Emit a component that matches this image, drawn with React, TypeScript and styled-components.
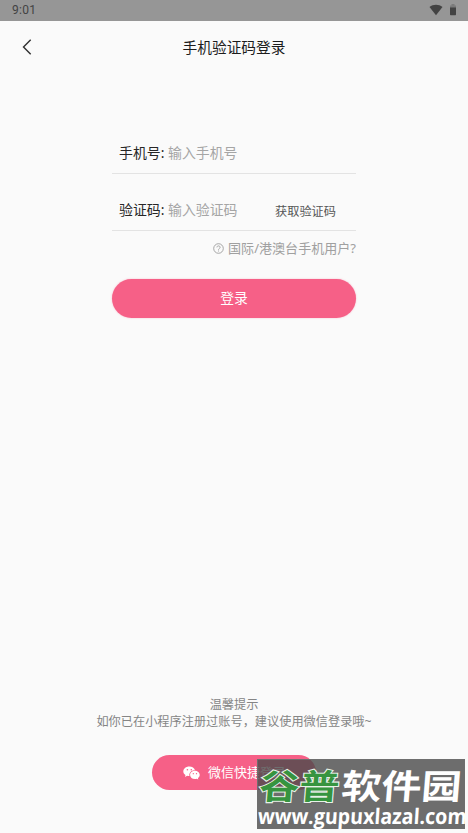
import React from 'react';
import styled, { createGlobalStyle } from 'styled-components';

const GlobalStyle = createGlobalStyle`
  * { box-sizing: border-box; }
  body {
    margin: 0;
    background: #fafafa;
    font-family: "Noto Sans", "Noto Sans CJK SC", sans-serif;
  }
  button, input { font: inherit; border: 0; padding: 0; background: none; }
`;

const Screen = styled.div`
  position: relative;
  display: flex;
  flex-direction: column;
  height: 833px;
  width: 468px;
  background: #fafafa;
  overflow: hidden;
`;

const StatusBar = styled.div`
  display: flex;
  justify-content: space-between;
  height: 21px;
  padding: 0 12px;
  background: #969696;
  color: #434343;
  font: 12px/21px Roboto, sans-serif;
  letter-spacing: 0.25px;
`;

const StatusIcons = styled.div`
  display: flex;
  gap: 7px;
  padding-top: 4px;
`;

const Header = styled.header`
  display: grid;
  grid-template-columns: 54px 1fr 54px;
  align-items: center;
  height: 53px;
  padding-bottom: 2px;
`;

const BackButton = styled.button`
  display: flex;
  justify-content: center;
`;

const Title = styled.h1`
  margin: 0;
  text-align: center;
  font-size: 14.7px;
  line-height: 22px;
  font-weight: 400;
  color: #1c1c1c;
`;

const Form = styled.form`
  display: flex;
  flex-direction: column;
  width: 244px;
  margin: 58px 0 0 112px;
`;

const Field = styled.label<{ $tall?: boolean }>`
  display: flex;
  align-items: center;
  height: ${(p) => (p.$tall ? 57 : 42)}px;
  padding: ${(p) => (p.$tall ? 15 : 0)}px 20px 0 7px;
  border-bottom: 1px solid #e3e3e3;
  font-size: 13.9px;
`;

const Label = styled.span`
  width: 49px;
  padding-bottom: 2px;
  white-space: nowrap;
  color: #262626;
`;

const Input = styled.input`
  width: 100px;
  height: 24px;
  color: #333;
  outline: 0;
  &::placeholder { color: #a5a5a5; opacity: 1; }
`;

const CodeButton = styled.button`
  margin-left: auto;
  padding-top: 2px;
  white-space: nowrap;
  font-size: 12.2px;
  color: #565656;
`;

const HelpLink = styled.div`
  display: flex;
  justify-content: flex-end;
  align-items: center;
  gap: 4px;
  height: 20px;
  margin-top: 7px;
  font-size: 13.05px;
  white-space: nowrap;
  color: #a0a0a0;
`;

const HelpText = styled.span`
  padding-bottom: 2px;
`;

const LoginButton = styled.button`
  height: 39px;
  margin-top: 21px;
  padding-bottom: 4px;
  border-radius: 20px;
  background: #f66087;
  color: #fff;
  font-size: 13.8px;
  box-shadow: 0 0 2px #f6608766;
`;

const Footer = styled.footer`
  display: flex;
  flex-direction: column;
  align-items: center;
  margin-top: auto;
  padding-bottom: 43px;
  font-size: 12.2px;
  line-height: 17px;
  color: #858585;
`;

const WechatButton = styled.button`
  display: flex;
  align-items: center;
  gap: 8px;
  width: 164px;
  height: 35px;
  margin-top: 25px;
  padding-left: 31px;
  border-radius: 18px;
  background: #f66087;
  color: #fff;
  font-size: 13px;
`;

const Watermark = styled.aside`
  position: absolute;
  left: 257px;
  top: 759px;
  width: 208px;
  height: 70px;
  border: 1px solid #6e6e6e;
  background: rgba(74, 74, 74, 0.8);
  color: #fff;
`;

const SiteName = styled.div`
  display: flex;
  height: 44px;
  padding-left: 2px;
  white-space: nowrap;
  font: 700 40px/50px "Noto Sans CJK SC", sans-serif;
  transform: scaleY(0.86) skewX(-4deg);
  paint-order: stroke fill;
`;

const GreenName = styled.span`
  width: 82px;
  color: #36943f;
  -webkit-text-stroke: 2.4px #e8f2e8;
`;

const SiteUrl = styled.div`
  width: max-content;
  white-space: nowrap;
  font: 700 19.6px/24px "Open Sans", "Noto Sans", sans-serif;
  transform: scaleY(1.1) skewX(-4deg);
`;

const WifiIcon = () => (
  <svg width="14" height="12" viewBox="0 0 14 12">
    <path d="M.5 3.1C4.2-.1 9.8-.1 13.5 3.1L7 11.2Z" fill="#434343" />
  </svg>
);

const BatteryIcon = () => (
  <svg width="6" height="12" viewBox="0 0 6 12">
    <path d="M0 1.5h1.5V0h3v1.5H6V4H0Z" fill="#7b7b7b" />
    <path d="M0 3.5h6V10.5q0 .7-.7.7H.7q-.7 0-.7-.7Z" fill="#434343" />
  </svg>
);

const BackIcon = () => (
  <svg width="10" height="16" viewBox="0 0 10 16" fill="none" stroke="#303030" strokeWidth="1.4">
    <path d="M8.7.7 1.5 8l7.2 7.3" />
  </svg>
);

const HelpIcon = () => (
  <svg width="11" height="11" viewBox="0 0 11 11" fill="none" stroke="#9c9c9c" strokeWidth="0.9">
    <circle cx="5.5" cy="5.5" r="4.8" />
    <path d="M3.9 4.4c0-2 3.2-2 3.2 0 0 1.2-1.6 1.1-1.6 2.3M5.5 7.5v1" />
  </svg>
);

const WechatIcon = () => (
  <svg width="17" height="14" viewBox="0 0 17 14">
    <path fill="#fff" d="M6.3.4C2.9.4.3 2.6.3 5.3c0 1.6.8 2.9 2.2 3.8L2 10.9l2.1-1.1c.8.2 1.5.3 2.4.3-.9-3.2 1.8-6 5.5-5.9C11.4 2 9.1.4 6.3.4Z" />
    <path fill="#fff" d="M16.7 8.9c0-2.3-2.2-4.1-4.8-4.1S7.1 6.6 7.1 8.9s2.1 4.1 4.8 4.1c.6 0 1.2-.1 1.8-.3l1.6.9-.4-1.5c1.1-.8 1.8-1.9 1.8-3.2Z" />
    <g fill="#f66087">
      <circle cx="4.4" cy="3.8" r=".8" />
      <circle cx="8.3" cy="3.8" r=".8" />
      <circle cx="10.3" cy="7.7" r=".65" />
      <circle cx="13.5" cy="7.7" r=".65" />
    </g>
  </svg>
);

export default function App() {
  return (
    <Screen>
      <GlobalStyle />
      <StatusBar>
        <span>9:01</span>
        <StatusIcons><WifiIcon /><BatteryIcon /></StatusIcons>
      </StatusBar>
      <Header>
        <BackButton type="button" aria-label="返回"><BackIcon /></BackButton>
        <Title>手机验证码登录</Title>
      </Header>
      <Form>
        <Field>
          <Label>手机号:</Label>
          <Input placeholder="输入手机号" />
        </Field>
        <Field $tall>
          <Label>验证码:</Label>
          <Input placeholder="输入验证码" />
          <CodeButton type="button">获取验证码</CodeButton>
        </Field>
        <HelpLink><HelpIcon /><HelpText>国际/港澳台手机用户?</HelpText></HelpLink>
        <LoginButton type="button">登录</LoginButton>
      </Form>
      <Footer>
        <span>温馨提示</span>
        <span>如你已在小程序注册过账号，建议使用微信登录哦~</span>
        <WechatButton type="button"><WechatIcon />微信快捷登录</WechatButton>
      </Footer>
      <Watermark>
        <SiteName><GreenName>谷普</GreenName>软件园</SiteName>
        <SiteUrl>www.gupuxlazal.com</SiteUrl>
      </Watermark>
    </Screen>
  );
}
